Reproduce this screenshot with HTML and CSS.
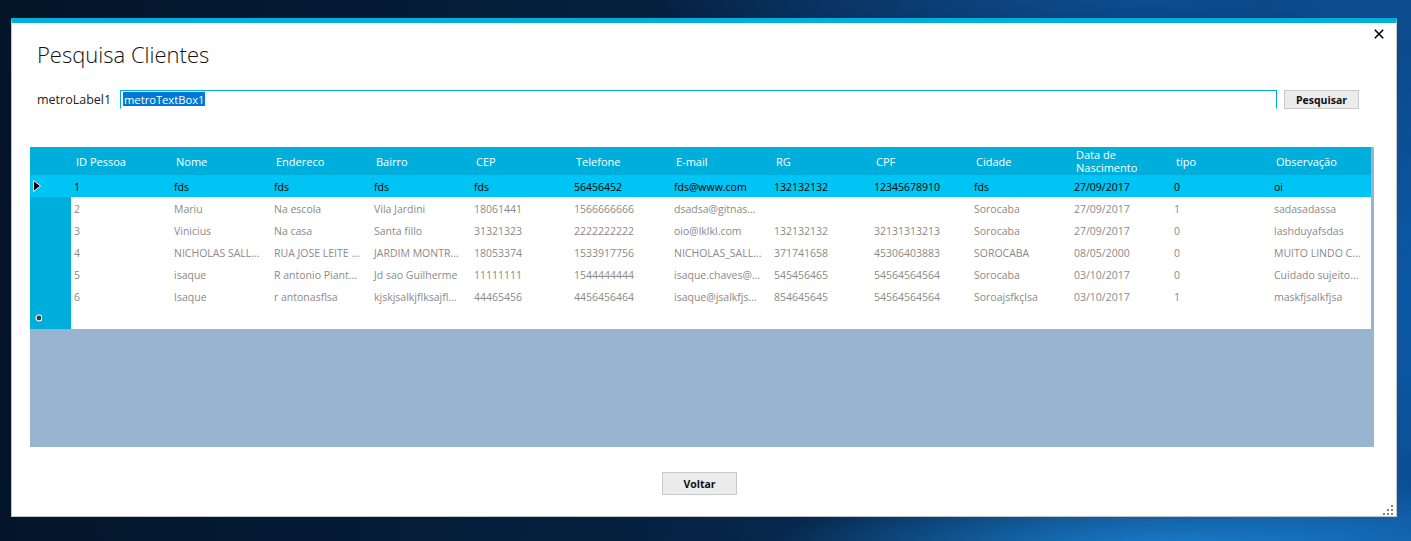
FILE: index.html
```html
<!DOCTYPE html>
<html lang="pt">
<head>
<meta charset="utf-8">
<title>Pesquisa Clientes</title>
<link rel="stylesheet" href="styles.css">
</head>
<body>
<div class="window">
  <button class="close" aria-label="Fechar">
    <svg width="10" height="10" viewBox="0 0 10 10"><path d="M0.8 0.8 L9.2 9.2 M9.2 0.8 L0.8 9.2" stroke="#000" stroke-width="1.6" fill="none"/></svg>
  </button>
  <h1 class="title">Pesquisa Clientes</h1>
  <div class="search">
    <span class="label">metroLabel1</span>
    <div class="textbox"><span class="sel">metroTextBox1</span></div>
    <button class="btn btn-search">Pesquisar</button>
  </div>
  <div class="grid">
    <table class="table">
      <colgroup>
        <col class="c-rh">
        <col class="c"><col class="c"><col class="c"><col class="c"><col class="c"><col class="c"><col class="c"><col class="c"><col class="c"><col class="c"><col class="c"><col class="c"><col class="c">
      </colgroup>
      <thead>
        <tr>
          <th class="rh"></th>
          <th>ID Pessoa</th><th>Nome</th><th>Endereco</th><th>Bairro</th><th>CEP</th><th>Telefone</th><th>E-mail</th><th>RG</th><th>CPF</th><th>Cidade</th><th>Data de<br>Nascimento</th><th>tipo</th><th>Observação</th>
        </tr>
      </thead>
      <tbody>
        <tr class="selected">
          <td class="rh"><svg class="arrow" width="12" height="22" viewBox="0 0 12 22"><path d="M3.5 5.5 L10.5 11 L3.5 16.5 Z" fill="#000" stroke="#fff" stroke-width="1"/></svg></td>
          <td>1</td><td>fds</td><td>fds</td><td>fds</td><td>fds</td><td>56456452</td><td>fds@www.com</td><td>132132132</td><td>12345678910</td><td>fds</td><td>27/09/2017</td><td>0</td><td>oi</td>
        </tr>
        <tr>
          <td class="rh"></td>
          <td>2</td><td>Mariu</td><td>Na escola</td><td>Vila Jardini</td><td>18061441</td><td>1566666666</td><td>dsadsa@gitnas...</td><td></td><td></td><td>Sorocaba</td><td>27/09/2017</td><td>1</td><td>sadasadassa</td>
        </tr>
        <tr>
          <td class="rh"></td>
          <td>3</td><td>Vinicius</td><td>Na casa</td><td>Santa fillo</td><td>31321323</td><td>2222222222</td><td>oio@lklkl.com</td><td>132132132</td><td>32131313213</td><td>Sorocaba</td><td>27/09/2017</td><td>0</td><td>lashduyafsdas</td>
        </tr>
        <tr>
          <td class="rh"></td>
          <td>4</td><td>NICHOLAS SALL...</td><td>RUA JOSE LEITE ...</td><td>JARDIM MONTR...</td><td>18053374</td><td>1533917756</td><td>NICHOLAS_SALL...</td><td>371741658</td><td>45306403883</td><td>SOROCABA</td><td>08/05/2000</td><td>0</td><td>MUITO LINDO C...</td>
        </tr>
        <tr>
          <td class="rh"></td>
          <td>5</td><td>isaque</td><td>R antonio Piant...</td><td>Jd sao Guilherme</td><td>11111111</td><td>1544444444</td><td>isaque.chaves@...</td><td>545456465</td><td>54564564564</td><td>Sorocaba</td><td>03/10/2017</td><td>0</td><td>Cuidado sujeito...</td>
        </tr>
        <tr>
          <td class="rh"></td>
          <td>6</td><td>Isaque</td><td>r antonasflsa</td><td>kjskjsalkjflksajfl...</td><td>44465456</td><td>4456456464</td><td>isaque@jsalkfjs...</td><td>854645645</td><td>54564564564</td><td>Soroajsfkçlsa</td><td>03/10/2017</td><td>1</td><td>maskfjsalkfjsa</td>
        </tr>
        <tr class="newrow">
          <td class="rh"><svg class="star" width="12" height="22" viewBox="0 0 12 22"><circle cx="9" cy="11" r="3" fill="#3a3a3a" stroke="#fff" stroke-width="1.2"/></svg></td>
          <td></td><td></td><td></td><td></td><td></td><td></td><td></td><td></td><td></td><td></td><td></td><td></td><td></td>
        </tr>
      </tbody>
    </table>
  </div>
  <div class="footer">
    <button class="btn btn-back">Voltar</button>
  </div>
  <svg class="grip" width="10" height="10" viewBox="0 0 10 10">
    <rect x="8" y="0" width="2" height="2" fill="#808080"/>
    <rect x="4" y="4" width="2" height="2" fill="#808080"/>
    <rect x="8" y="4" width="2" height="2" fill="#808080"/>
    <rect x="0" y="8" width="2" height="2" fill="#808080"/>
    <rect x="4" y="8" width="2" height="2" fill="#808080"/>
    <rect x="8" y="8" width="2" height="2" fill="#808080"/>
  </svg>
</div>
</body>
</html>
```

FILE: styles.css
```css
html, body {
  margin: 0;
  height: 100%;
}
body {
  width: 1411px;
  height: 541px;
  overflow: hidden;
  box-sizing: border-box;
  padding: 18px 0 0 11px;
  font-family: "Open Sans", "Noto Sans", sans-serif;
  background:
    radial-gradient(ellipse 420px 90px at 1180px 560px, rgba(30,140,225,0.95), rgba(30,140,225,0) 100%),
    radial-gradient(ellipse 260px 380px at 1430px 300px, rgba(12,90,170,0.95), rgba(12,90,170,0) 100%),
    radial-gradient(ellipse 500px 60px at 1150px 0px, rgba(14,80,150,0.9), rgba(14,80,150,0) 100%),
    linear-gradient(95deg, #031428 0%, #05203f 45%, #083566 80%, #0b4682 100%);
}
.window {
  position: relative;
  width: 1386px;
  height: 499px;
  box-sizing: border-box;
  background: #fff;
  border: 1px solid #c4c4c4;
  border-top: 5px solid #00aedb;
}
.close {
  position: absolute;
  left: 1361px;
  top: 5px;
  width: 12px;
  height: 12px;
  padding: 0;
  margin: 0;
  border: 0;
  background: transparent;
  display: flex;
  align-items: center;
  justify-content: center;
}
.title {
  margin: 15px 0 0 0;
  padding-left: 25px;
  font-size: 22px;
  font-weight: 300;
  line-height: 32px;
  color: #111;
}
.search {
  margin-top: 20px;
  display: flex;
  align-items: stretch;
  height: 19px;
  padding-left: 25px;
}
.label {
  flex: 0 0 83px;
  font-size: 12.5px;
  line-height: 19px;
  color: #222;
}
.textbox {
  flex: 0 0 1157px;
  box-sizing: border-box;
  border: 1px solid #00aedb;
  border-bottom-color: #fff;
  padding: 1px 0 0 2px;
  display: flex;
  align-items: flex-start;
}
.sel {
  background: #0078d7;
  color: #fff;
  font-size: 11.2px;
  line-height: 15px;
  height: 14px;
  padding: 0 1px;
}
.btn {
  box-sizing: border-box;
  padding: 0;
  margin: 0;
  border: 1px solid #c9c9c9;
  background: #ececec;
  font-family: "Open Sans", "Noto Sans", sans-serif;
  font-weight: 700;
  color: #111;
}
.btn-search {
  margin-left: 7px;
  width: 75px;
  height: 19px;
  font-size: 10.5px;
  line-height: 16px;
}
.grid {
  margin: 38px 0 0 18px;
  width: 1344px;
  height: 300px;
  background: #99b4d1;
}
.table {
  border-collapse: collapse;
  border-spacing: 0;
  table-layout: fixed;
  width: 1341px;
}
.c-rh { width: 41px; }
.c { width: 100px; }
.table th {
  height: 28px;
  padding: 0 0 0 5px;
  box-sizing: border-box;
  background: #00aedb;
  color: #fff;
  font-size: 11px;
  font-weight: 400;
  line-height: 13px;
  text-align: left;
  vertical-align: middle;
  white-space: nowrap;
}
.table td {
  height: 22px;
  padding: 2px 0 0 3px;
  box-sizing: border-box;
  background: #fff;
  color: #8a8a8a;
  font-size: 10.5px;
  line-height: 20px;
  white-space: nowrap;
  overflow: hidden;
}
.table td.rh,
.table th.rh {
  background: #00aedb;
  padding: 0;
}
.table tr.selected td,
.table tr.selected td.rh {
  background: #00c4f4;
  color: #000;
}
.arrow, .star {
  display: block;
}
.footer {
  margin-top: 25px;
  padding-left: 650px;
  display: flex;
}
.btn-back {
  width: 75px;
  height: 23px;
  font-size: 10.5px;
  line-height: 20px;
}
.grip {
  position: absolute;
  left: 1371px;
  top: 482px;
}
```
